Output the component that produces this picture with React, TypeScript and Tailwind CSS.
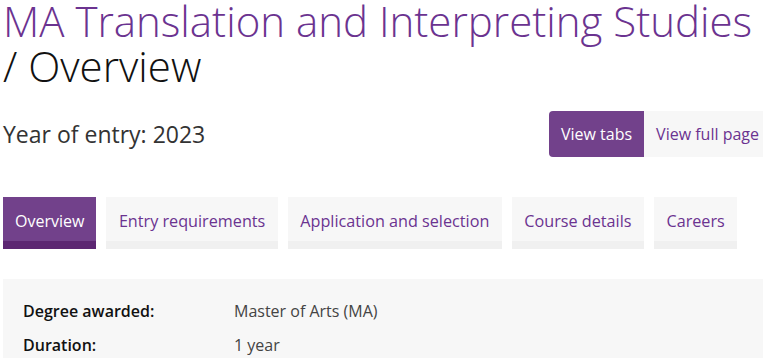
const tabs = ['Overview', 'Entry requirements', 'Application and selection', 'Course details', 'Careers']

const App = () => {
  return (
    <div className="min-h-screen w-full bg-white pl-[3px] font-['Open_Sans',sans-serif] overflow-hidden">
      <h1 className="-mt-[2px] text-[42px] leading-[45px] font-light whitespace-nowrap">
        <span className="text-[#6b3390]">MA Translation and Interpreting Studies</span>
        <br />
        <span className="text-[#111]">/ Overview</span>
      </h1>

      <div className="mt-[23px] flex items-center justify-between">
        <p className="text-[23px] text-[#333]">Year of entry: 2023</p>
        <div className="flex -mr-[28px]">
          <button className="h-[46px] rounded-l-[4px] bg-[#72418b] px-3 text-[16px] text-white">View tabs</button>
          <button className="h-[46px] bg-[#f7f7f7] px-3 pr-8 text-[16px] text-[#6b3390]">View full page</button>
        </div>
      </div>

      <nav className="mt-[40px] flex gap-[10px]">
        {tabs.map((t, i) => (
          <div
            key={t}
            className={
              i === 0
                ? 'flex h-[52px] items-center border-b-8 border-[#5c2672] bg-[#72418b] px-[12px] pt-[4px] text-[16px] text-white'
                : 'flex h-[52px] items-center border-b-8 border-[#f0f0f0] bg-[#f7f7f7] px-[12.5px] pt-[4px] text-[16.2px] text-[#6b3390]'
            }
          >
            {t}
          </div>
        ))}
      </nav>

      <div className="mt-[30px] bg-[#f7f7f7] px-[20px] pt-[15px] pb-6 text-[16px]">
        <div className="flex h-[34px] items-center">
          <span className="w-[211px] font-semibold text-[#111]">Degree awarded:</span>
          <span className="text-[#444]">Master of Arts (MA)</span>
        </div>
        <div className="flex h-[34px] items-center">
          <span className="w-[211px] font-semibold text-[#111]">Duration:</span>
          <span className="text-[#444]">1 year</span>
        </div>
      </div>
    </div>
  )
}

export default App
